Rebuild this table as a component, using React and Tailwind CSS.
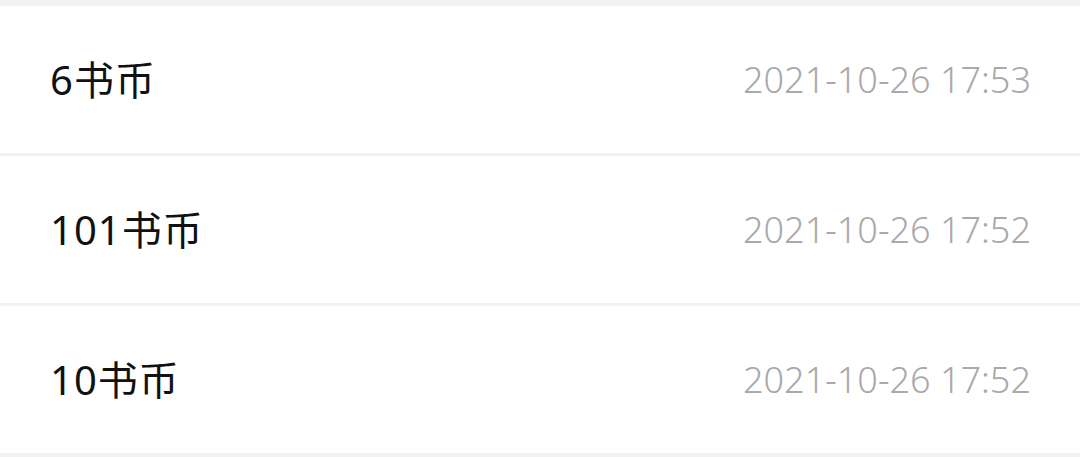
export default function App() {
  const rows = [
    { amount: "6书币", time: "2021-10-26 17:53" },
    { amount: "101书币", time: "2021-10-26 17:52" },
    { amount: "10书币", time: "2021-10-26 17:52" },
  ];
  return (
    <div
      className="w-[1080px] h-[457px] bg-[#f2f2f2] pt-[6px] flex flex-col gap-[3px] overflow-hidden"
      style={{ fontFamily: '"Noto Sans", "Noto Sans CJK SC", sans-serif' }}
    >
      {rows.map((r, i) => (
        <div
          key={i}
          className="h-[147px] shrink-0 bg-white flex items-center justify-between pl-[50px] pr-[49px]"
        >
          <span className="text-[40px] leading-none tracking-[1px] text-[#111111]">{r.amount}</span>
          <span className="text-[36px] leading-none font-light text-[#a9a9a9]">{r.time}</span>
        </div>
      ))}
    </div>
  );
}
